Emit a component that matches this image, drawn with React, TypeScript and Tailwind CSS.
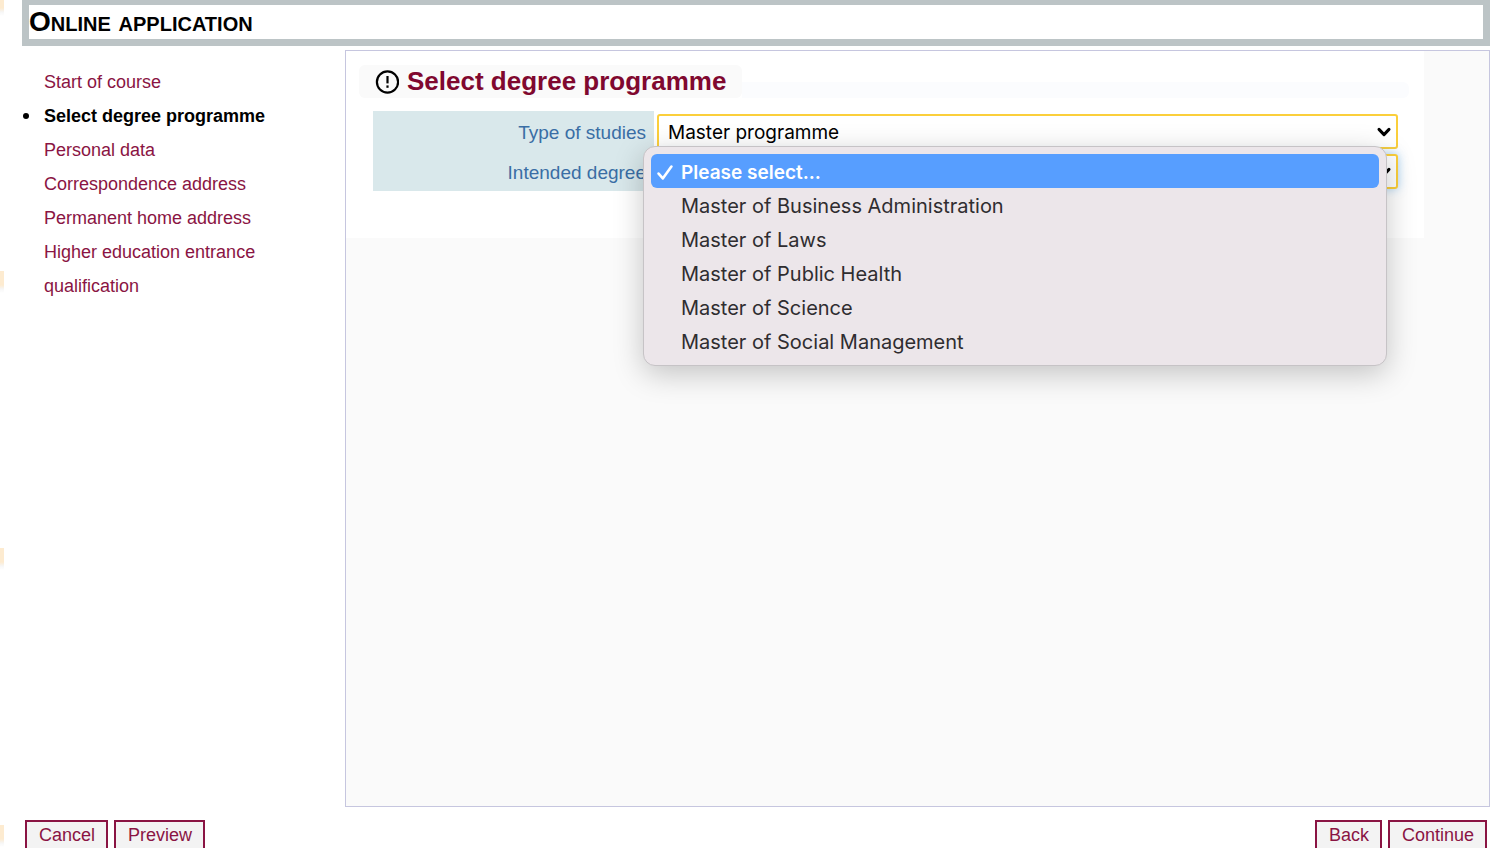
import React, { useState } from "react";

const STEPS = [
  "Start of course",
  "Select degree programme",
  "Personal data",
  "Correspondence address",
  "Permanent home address",
  "Higher education entrance qualification",
];

const DEGREES = [
  "Please select...",
  "Master of Business Administration",
  "Master of Laws",
  "Master of Public Health",
  "Master of Science",
  "Master of Social Management",
];

function Chevron() {
  return (
    <svg
      viewBox="0 0 16 12"
      className="pointer-events-none absolute top-1/2 right-[6px] h-3 w-4 -translate-y-1/2"
      fill="none"
      stroke="black"
      strokeWidth="3"
      strokeLinecap="round"
      strokeLinejoin="round"
      aria-hidden="true"
    >
      <path d="M3 3.4 8 8.6 13 3.4" />
    </svg>
  );
}

function ActionButton({ children }: { children: React.ReactNode }) {
  return (
    <button
      type="button"
      className="border-2 border-[#8a1443] bg-[#f3f3f3] pr-[11px] pl-3 text-lg leading-[26px] text-[#8a1443]"
    >
      {children}
    </button>
  );
}

function Steps({ current }: { current: number }) {
  return (
    <nav className="pt-[15px] pr-8" aria-label="Application steps">
      <ul className="text-lg leading-[34px]">
        {STEPS.map((step, i) => (
          <li key={step} className="flex">
            <span className="flex h-[34px] w-[22px] shrink-0 items-center pl-px">
              {i === current && <span className="h-[6px] w-[6px] rounded-full bg-black" />}
            </span>
            {i === current ? (
              <strong className="whitespace-nowrap text-black">{step}</strong>
            ) : (
              <a href="#" className="text-[#8a1443]">
                {step}
              </a>
            )}
          </li>
        ))}
      </ul>
    </nav>
  );
}

const labelClass =
  "h-10 w-[281px] shrink-0 bg-[#d9e8eb] pt-[2px] pr-2 text-right text-[19px] leading-10 text-[#3a6ea5]";

const selectClass =
  "block h-[35px] w-full appearance-none rounded-[3px] border-2 border-[#fbcf3b] bg-white pt-[3px] pr-8 pl-[9px] font-[Inter,sans-serif] text-[19px] text-black outline-none";

export default function App() {
  const [degree, setDegree] = useState(DEGREES[0]);

  return (
    <div className="min-h-screen bg-white bg-[linear-gradient(to_bottom,#fdebd0_0,#fdebd0_14px,#f6f6f6_18px,transparent_22px)] bg-[size:4px_277px] bg-[position:0_-6px] bg-repeat-y pr-4 pb-3 pl-[22px] font-['Liberation_Sans',Arial,sans-serif]">
      <header className="border-x-[7px] border-t-[5px] border-b-[7px] border-[#bcc4c6] bg-white">
        <h1 className="text-[28px] leading-[34px] font-bold text-black [font-variant:small-caps]">
          Online application
        </h1>
      </header>

      <main className="mt-1 grid min-h-[calc(100vh-91px)] grid-cols-[323px_1fr]">
        <Steps current={1} />

        <section className="border border-[#c6c6df] bg-[#fafafa]">
          <form className="mr-[65px] bg-white pt-[14px] pr-[15px] pb-[47px] pl-[13px]">
            <div className="flex items-end">
              <h2 className="flex h-[33px] items-center gap-2 rounded-md bg-[#fafafa] pr-4 pl-4 text-[26px] leading-[33px] font-bold text-[#80082f]">
                <svg viewBox="0 0 24 24" className="h-6 w-6" fill="none" stroke="black" aria-hidden="true">
                  <circle cx="12.5" cy="12" r="10.6" strokeWidth="2.2" />
                  <path d="M12.5 6v7.4" strokeWidth="2.2" />
                  <path d="M12.5 15.4v2.4" strokeWidth="2.2" />
                </svg>
                Select degree programme
              </h2>
              <div className="h-4 flex-1 rounded-r-md bg-[#fbfcfe]" />
            </div>

            <div className="mt-[13px] mr-[11px] ml-[14px]">
              <div className="flex gap-[3px]">
                <label htmlFor="studies" className={labelClass}>
                  Type of studies
                </label>
                <div className="relative mt-[3px] h-[35px] flex-1">
                  <select id="studies" className={selectClass}>
                    <option>Master programme</option>
                  </select>
                  <Chevron />
                </div>
              </div>

              <div className="flex gap-[3px]">
                <label htmlFor="degree" className={labelClass}>
                  Intended degree
                </label>
                <div className="relative mt-[3px] h-[35px] flex-1 rounded-[3px] shadow-[0_0_10px_rgba(82,168,236,0.5)]">
                  <select
                    id="degree"
                    className={selectClass}
                    value={degree}
                    onChange={(e) => setDegree(e.target.value)}
                  >
                    {DEGREES.map((d) => (
                      <option key={d}>{d}</option>
                    ))}
                  </select>
                  <Chevron />
                  <ul
                    role="listbox"
                    aria-label="Intended degree"
                    className="absolute -top-2 right-[11px] -left-[14px] z-10 rounded-xl border border-[#c6c3c6] bg-[#ece6ea] p-[7px] font-[Inter,sans-serif] text-[#2f2d30] shadow-[0_8px_30px_rgba(0,0,0,0.22)]"
                  >
                    {DEGREES.map((d) => (
                      <li key={d} role="option" aria-selected={d === degree}>
                        <button
                          type="button"
                          onClick={() => setDegree(d)}
                          className={
                            d === degree
                              ? "flex w-full items-center rounded-md bg-[#579eff] pt-[3px] text-left text-[19px] leading-[31px] font-semibold text-white"
                              : "flex w-full items-center pt-[3px] text-left text-[20px] leading-[31px]"
                          }
                        >
                          <span className="flex w-[30px] shrink-0 pl-[6px]">
                            {d === degree && (
                              <svg
                                viewBox="0 0 16 16"
                                className="h-4 w-4"
                                fill="none"
                                stroke="white"
                                strokeWidth="2.6"
                                strokeLinecap="round"
                                strokeLinejoin="round"
                                aria-hidden="true"
                              >
                                <path d="M1.6 8.6 5.8 13.4 14.4 1.6" />
                              </svg>
                            )}
                          </span>
                          {d}
                        </button>
                      </li>
                    ))}
                  </ul>
                </div>
              </div>
            </div>
          </form>
        </section>
      </main>

      <footer className="mt-[13px] flex justify-between px-[3px]">
        <div className="flex gap-[6px]">
          <ActionButton>Cancel</ActionButton>
          <ActionButton>Preview</ActionButton>
        </div>
        <div className="flex gap-[6px]">
          <ActionButton>Back</ActionButton>
          <ActionButton>Continue</ActionButton>
        </div>
      </footer>
    </div>
  );
}
